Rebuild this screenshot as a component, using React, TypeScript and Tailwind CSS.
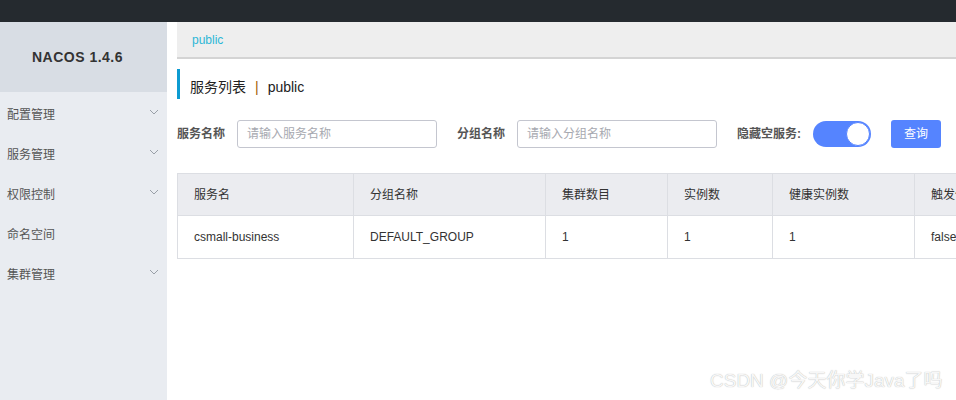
import React from "react";

const cjk = "font-['Liberation_Sans','Noto_Sans_CJK_SC',sans-serif]";

function Chevron() {
  return (
    <svg width="10" height="6" viewBox="0 0 10 6" className="shrink-0">
      <path d="M1 1l4 4 4-4" fill="none" stroke="#9aa0a8" strokeWidth="1" />
    </svg>
  );
}

export default function App() {
  const menu = [
    { label: "配置管理", arrow: true },
    { label: "服务管理", arrow: true },
    { label: "权限控制", arrow: true },
    { label: "命名空间", arrow: false },
    { label: "集群管理", arrow: true },
  ];

  const cols = [
    { title: "服务名", w: "w-[175px]", value: "csmall-business" },
    { title: "分组名称", w: "w-[192px]", value: "DEFAULT_GROUP" },
    { title: "集群数目", w: "w-[122px]", value: "1" },
    { title: "实例数", w: "w-[105px]", value: "1" },
    { title: "健康实例数", w: "w-[142px]", value: "1" },
    { title: "触发保护阈值", w: "w-[120px]", value: "false" },
  ];

  return (
    <div className={`relative w-[956px] h-[400px] overflow-hidden bg-white flex flex-col ${cjk}`}>
      {/* 上部のダークバー */}
      <div className="h-[22px] bg-[#252a2f] shrink-0" />

      <div className="flex flex-1 min-h-0">
        {/* サイドバー */}
        <aside className="w-[167px] shrink-0 bg-[#e9ecf1] flex flex-col">
          <div className="h-[70px] bg-[#d8dde4] flex items-center justify-center pr-[12px]">
            <span className="font-['Liberation_Sans',sans-serif] font-bold text-[14px] text-[#333] tracking-[0.5px]">
              NACOS 1.4.6
            </span>
          </div>
          <ul className="pt-[3px]">
            {menu.map((m) => (
              <li key={m.label} className="h-[40px] flex items-center justify-between pl-[7px] pr-[8px]">
                <span className="text-[12px] text-[#555]">{m.label}</span>
                {m.arrow && (
                  <span className="-mt-[6px]">
                    <Chevron />
                  </span>
                )}
              </li>
            ))}
          </ul>
        </aside>

        {/* メイン */}
        <main className="flex-1 min-w-0 pl-[10px] overflow-hidden">
          <div className="h-[37px] bg-[#eeeeee] border-b-2 border-[#d4d4d4] flex items-center pl-[15px]">
            <span className="text-[12px] text-[#2db7d6]">public</span>
          </div>

          <div className="mt-[10px] h-[30px] border-l-[3px] border-[#0d9bd1] flex items-center pl-[10px] pt-[7px] text-[14px] text-[#222]">
            <span>服务列表</span>
            <span className="mx-[9px] text-[#a0600a]">|</span>
            <span>public</span>
          </div>

          {/* 検索フォーム */}
          <div className="mt-[21px] flex items-center text-[12px]">
            <span className="font-bold text-[#555] w-[60px]">服务名称</span>
            <div className="w-[200px] h-[28px] border border-[#c4c6cf] rounded-[3px] flex items-center pl-[9px] text-[#a7a9b0]">
              请输入服务名称
            </div>
            <span className="ml-[20px] font-bold text-[#555] w-[60px]">分组名称</span>
            <div className="w-[200px] h-[28px] border border-[#c4c6cf] rounded-[3px] flex items-center pl-[9px] text-[#a7a9b0]">
              请输入分组名称
            </div>
            <span className="ml-[20px] font-bold text-[#555] w-[76px]">隐藏空服务:</span>
            <div className="w-[58px] h-[26px] rounded-full bg-[#5584ff] flex items-center justify-end pr-[1px]">
              <div className="w-[24px] h-[24px] rounded-full bg-white border border-[#5584ff]" />
            </div>
            <button className="ml-[20px] w-[50px] h-[28px] rounded-[3px] bg-[#5584ff] text-white text-[12px]">
              查询
            </button>
          </div>

          {/* テーブル */}
          <div className="mt-[25px] w-[900px] border border-[#dcdee3] text-[12px] text-[#333]">
            <div className="flex h-[42px] bg-[#ebecf0] border-b border-[#dcdee3]">
              {cols.map((c, i) => (
                <div
                  key={c.title}
                  className={`${c.w} shrink-0 flex items-center pl-[16px] ${i > 0 ? "border-l border-[#dcdee3]" : ""}`}
                >
                  {c.title}
                </div>
              ))}
            </div>
            <div className="flex h-[42px]">
              {cols.map((c, i) => (
                <div
                  key={c.title}
                  className={`${c.w} shrink-0 flex items-center pl-[16px] ${i > 0 ? "border-l border-[#dcdee3]" : ""}`}
                >
                  {c.value}
                </div>
              ))}
            </div>
          </div>
        </main>
      </div>

      {/* ウォーターマーク */}
      <div className="absolute left-[710px] top-[368px] text-[19px] leading-[26px] text-[#f7f7f7] [text-shadow:0_0_1px_#aaa] whitespace-nowrap">
        CSDN @今天你学Java了吗
      </div>
    </div>
  );
}
